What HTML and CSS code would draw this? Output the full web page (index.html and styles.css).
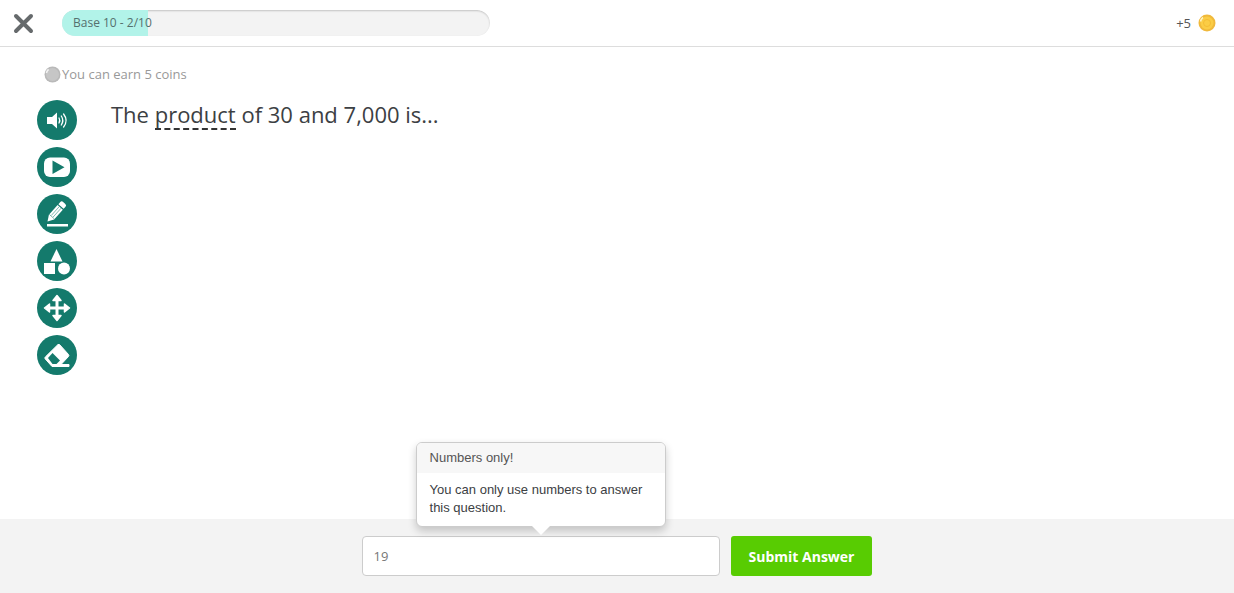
FILE: index.html
```html
<!DOCTYPE html>
<html lang="en">
  <head>
    <meta charset="UTF-8" />
    <meta name="viewport" content="width=device-width, initial-scale=1" />
    <title>Base 10</title>
    <link rel="stylesheet" href="styles.css">
  </head>
  <body>
    <header class="topbar">
      <button type="button" class="close-btn" aria-label="Close">
        <svg width="22" height="22" viewBox="0 0 22 22">
          <path d="M4 4L19 19M19 4L4 19" stroke="#666a6c" stroke-width="4" stroke-linecap="round" />
        </svg>
      </button>
      <div class="progress" role="progressbar" aria-label="Base 10" aria-valuemin="0" aria-valuemax="10" aria-valuenow="2">
        <div class="progress-fill" style="width: 20%"></div>
        <span class="progress-label">Base 10 - 2/10</span>
      </div>
      <div class="coins">
        <span>+5</span>
        <svg width="18" height="18" viewBox="0 0 18 18">
          <circle cx="9" cy="9" r="8.5" fill="#f0b93c" />
          <circle cx="9" cy="9" r="6.5" fill="#fbcd45" />
          <circle cx="9" cy="9" r="3.5" fill="none" stroke="#f4bd35" />
          <path d="M2.5 7.5A7 7 0 0 1 5 3.3" fill="none" stroke="#fff3c4" stroke-width="1.5" />
        </svg>
      </div>
    </header>

    <main class="question">
      <div class="earn">
        <svg width="17" height="17" viewBox="0 0 17 17">
          <circle cx="8.5" cy="8.5" r="8" fill="#b9b9b9" />
          <circle cx="8.5" cy="8.5" r="6.5" fill="#c6c6c6" />
          <path d="M2.4 7A6.5 6.5 0 0 1 4.6 3.4" fill="none" stroke="#f4f4f4" stroke-width="1.5" />
        </svg>
        <span>You can earn 5 coins</span>
      </div>

      <div class="question-body">
        <div class="tools">
          <button type="button" class="tool-btn" aria-label="Read aloud">
            <svg viewBox="0 0 40 40">
              <path d="M10 17h5l5-4.5v16L15 24h-5z" fill="#fff" />
              <path d="M22 18q1.600 2.500 0 5M24.300 16q3 4.500 0 9M26.600 14q5 6.500 0 13" fill="none" stroke="#fff" stroke-width="1.300" stroke-linecap="round" />
            </svg>
          </button>
          <button type="button" class="tool-btn" aria-label="Watch video">
            <svg viewBox="0 0 40 40">
              <rect x="7" y="10.500" width="26" height="19.500" rx="6" fill="#fff" />
              <path d="M15.500 13.500v13.500l12-6.750z" fill="#147a6c" />
            </svg>
          </button>
          <button type="button" class="tool-btn" aria-label="Draw">
            <svg viewBox="0 0 40 40">
              <g transform="translate(10.500 27.500) rotate(42)">
                <path d="M0 0L-3.500-6V-19H3.500V-6z" fill="#fff" />
                <path d="M-3.500-20.200V-23q0-2 2-2h3q2 0 2 2v2.800z" fill="#fff" />
                <path d="M-3.500-6.500h7M-1.200-7v-12M1.200-7v-12" stroke="#147a6c" stroke-width="0.500" />
              </g>
              <rect x="10" y="30" width="21" height="2.500" fill="#fff" />
            </svg>
          </button>
          <button type="button" class="tool-btn" aria-label="Shapes">
            <svg viewBox="0 0 40 40" fill="#fff">
              <path d="M19.500 8l6 12.500h-12z" />
              <rect x="7" y="22" width="11" height="11" />
              <circle cx="27" cy="27.500" r="6" />
            </svg>
          </button>
          <button type="button" class="tool-btn" aria-label="Move">
            <svg viewBox="0 0 40 40">
              <path d="M20 11v18M11 20h18" stroke="#fff" stroke-width="3" />
              <path d="M20 7.500l4 5h-8zM20 32.500l4-5h-8zM7.500 20l5-4v8zM32.500 20l-5-4v8z" fill="#fff" stroke="#fff" stroke-width="1.500" stroke-linejoin="round" />
            </svg>
          </button>
          <button type="button" class="tool-btn" aria-label="Erase">
            <svg viewBox="0 0 40 40">
              <path d="M22.500 9.500L31.500 19.500q.8 1 0 2L24 29.500H32v2H15L8.300 24q-1-1 0-2L21 9.500z" fill="#fff" stroke="#fff" stroke-linejoin="round" />
              <path d="M15.500 18l7.500 7.500-3.500 3.500h-4L11 23z" fill="#147a6c" />
            </svg>
          </button>
        </div>
        <h1 class="question-text">The <span class="term">product</span> of 30 and 7,000 is...</h1>
      </div>
    </main>

    <form class="answer-bar">
      <div class="answer-field">
        <input type="text" class="answer-input" aria-label="Your answer" aria-describedby="answerHint" value="19" />
        <div class="popover" id="answerHint" role="tooltip">
          <div class="popover-title">Numbers only!</div>
          <div class="popover-content">You can only use numbers to answer this question.</div>
        </div>
      </div>
      <button type="submit" class="submit-btn">Submit Answer</button>
    </form>
  </body>
</html>
```
FILE: styles.css
```css
:root {
  --teal: #147a6c;
  --mint: #b2f3e9;
  --green: #58cc02;
  --gray-bg: #f3f3f3;
  --border: #dddddd;
}

* {
  box-sizing: border-box;
}

body {
  display: flex;
  flex-direction: column;
  min-height: 100vh;
  margin: 0;
  background: white;
  color: #3c4043;
  font-family: "Open Sans", "Noto Sans", sans-serif;
}

button {
  padding: 0;
  border: 0;
  background: none;
  font-family: inherit;
  cursor: pointer;
}

svg {
  display: block;
}

.topbar {
  display: flex;
  align-items: center;
  padding: 10px 18px 10px 12px;
  border-bottom: 1px solid var(--border);
}

.progress {
  position: relative;
  width: 36%;
  max-width: 428px;
  height: 26px;
  margin-left: 28px;
  overflow: hidden;
  border-radius: 13px;
  background: var(--gray-bg);
}

.progress::after {
  content: "";
  position: absolute;
  inset: 0;
  border-radius: 13px;
  box-shadow: inset 0 1px 2px rgba(0, 0, 0, 0.2);
}

.progress-fill {
  position: relative;
  z-index: 1;
  height: 100%;
  background: var(--mint);
}

.progress-label {
  position: absolute;
  z-index: 2;
  inset: 0;
  padding-left: 11px;
  color: #55706e;
  font-size: 12px;
  line-height: 26px;
}

.coins {
  display: flex;
  align-items: center;
  gap: 7px;
  margin-left: auto;
  color: #555;
  font-size: 13px;
}

.question {
  flex: 1;
  padding: 17px 37px;
}

.earn {
  display: flex;
  align-items: center;
  gap: 1px;
  padding-left: 7px;
  color: #999;
  font-size: 13px;
  line-height: 20px;
}

.question-body {
  display: flex;
  align-items: flex-start;
  gap: 34px;
  margin-top: 16px;
}

.tools {
  display: flex;
  flex-direction: column;
  gap: 7px;
}

.tool-btn {
  width: 40px;
  height: 40px;
  border-radius: 50%;
  background: var(--teal);
}

.question-text {
  margin: 0;
  font-size: 22px;
  font-weight: 400;
  line-height: 28px;
}

.term {
  display: inline-block;
  border-bottom: 2px dashed #333;
}

.answer-bar {
  display: flex;
  justify-content: center;
  gap: 11px;
  padding: 17px 20px;
  background: var(--gray-bg);
}

.answer-field {
  position: relative;
  flex: 0 1 358px;
}

.answer-input {
  display: block;
  width: 100%;
  height: 40px;
  padding: 0 11px;
  border: 1px solid #ccc;
  border-radius: 4px;
  background: white;
  color: #777;
  font-family: inherit;
  font-size: 13px;
}

.submit-btn {
  padding: 0 18px;
  border-radius: 3px;
  background: var(--green);
  color: white;
  font-size: 14px;
  font-weight: 700;
}

.popover {
  position: absolute;
  bottom: 49px;
  left: 50%;
  width: 250px;
  transform: translateX(-50%);
  border: 1px solid #ccc;
  border-radius: 6px;
  background: white;
  box-shadow: 0 4px 8px rgba(0, 0, 0, 0.2);
  font-family: "Liberation Sans", Arial, sans-serif;
  font-size: 13px;
  line-height: 18px;
}

.popover::after {
  content: "";
  position: absolute;
  top: 100%;
  left: 50%;
  margin-left: -9px;
  border: 9px solid transparent;
  border-top-color: white;
  border-bottom: 0;
}

.popover-title {
  padding: 6px 13px;
  border-radius: 5px 5px 0 0;
  background: #f7f7f7;
  color: #555;
}

.popover-content {
  padding: 8px 13px 9px;
}
```
